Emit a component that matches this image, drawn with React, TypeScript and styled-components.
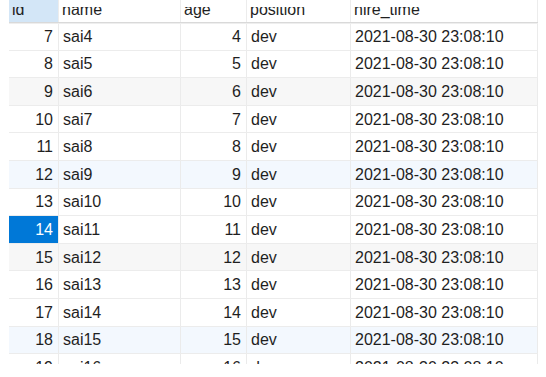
import React from 'react';
import styled, { createGlobalStyle } from 'styled-components';

const GlobalStyle = createGlobalStyle`
  html, body {
    margin: 0;
    padding: 0;
    background: #ffffff;
  }
  body {
    font-family: 'Liberation Sans', Arial, sans-serif;
    color: #1f1f1f;
  }
  * {
    box-sizing: border-box;
  }
`;

const COLUMNS = '50px 122px 66px 104px 187px';

type Tint = 'none' | 'gray' | 'blue';

const tintColor: Record<Tint, string> = {
  none: '#ffffff',
  gray: '#f7f7f7',
  blue: '#f3f8fe',
};

const Viewport = styled.div`
  height: 364px;
  overflow: hidden;
  padding-left: 9px;
`;

const Grid = styled.div`
  width: 529px;
  font-size: 16px;
`;

const HeaderRow = styled.div`
  display: grid;
  grid-template-columns: ${COLUMNS};
  height: 23px;
  border-bottom: 1px solid #d9d9d9;
  box-shadow: 0 1px 0 #eeeeee;
  position: relative;
  z-index: 1;
`;

const HeaderCell = styled.div<{ $active?: boolean }>`
  background: ${({ $active }) => ($active ? '#d3e6f7' : '#ffffff')};
  border-right: 1px solid #ececec;
  padding: 7px 4px 0 3px;
  overflow: hidden;
`;

const HeaderClip = styled.span`
  display: block;
  height: 13px;
  overflow: hidden;
`;

const HeaderLabel = styled.span`
  display: block;
  line-height: 16px;
  margin-top: -5px;
  white-space: nowrap;
`;

const Row = styled.div<{ $tint: Tint }>`
  display: grid;
  grid-template-columns: ${COLUMNS};
  height: 27.6px;
  background: ${({ $tint }) => tintColor[$tint]};
  border-bottom: 1px solid #ececec;
`;

const Cell = styled.div<{ $numeric?: boolean; $selected?: boolean }>`
  display: flex;
  align-items: center;
  justify-content: ${({ $numeric }) => ($numeric ? 'flex-end' : 'flex-start')};
  padding: ${({ $numeric }) => ($numeric ? '1px 5px 0 4px' : '1px 4px 0 4px')};
  border-right: 1px solid #ebebeb;
  white-space: nowrap;
  overflow: hidden;
  background: ${({ $selected }) => ($selected ? '#0078d7' : 'transparent')};
  color: ${({ $selected }) => ($selected ? '#ffffff' : '#1f1f1f')};
`;

const headers = ['id', 'name', 'age', 'position', 'hire_time'];

const rows = Array.from({ length: 13 }, (_, i) => {
  const id = i + 7;
  return {
    id,
    name: `sai${id - 3}`,
    age: id - 3,
    position: 'dev',
    hireTime: '2021-08-30 23:08:10',
  };
});

const tintFor = (id: number): Tint => {
  if (id === 9 || id === 15) return 'gray';
  if (id === 12 || id === 18) return 'blue';
  return 'none';
};

const App = (): React.ReactElement => (
  <>
    <GlobalStyle />
    <Viewport>
      <Grid>
        <HeaderRow>
          {headers.map((h) => (
            <HeaderCell key={h} $active={h === 'id'}>
              <HeaderClip>
                <HeaderLabel>{h}</HeaderLabel>
              </HeaderClip>
            </HeaderCell>
          ))}
        </HeaderRow>
        {rows.map((r) => (
          <Row key={r.id} $tint={tintFor(r.id)}>
            <Cell $numeric $selected={r.id === 14}>
              {r.id}
            </Cell>
            <Cell>{r.name}</Cell>
            <Cell $numeric>{r.age}</Cell>
            <Cell>{r.position}</Cell>
            <Cell>{r.hireTime}</Cell>
          </Row>
        ))}
      </Grid>
    </Viewport>
  </>
);

export default App;
